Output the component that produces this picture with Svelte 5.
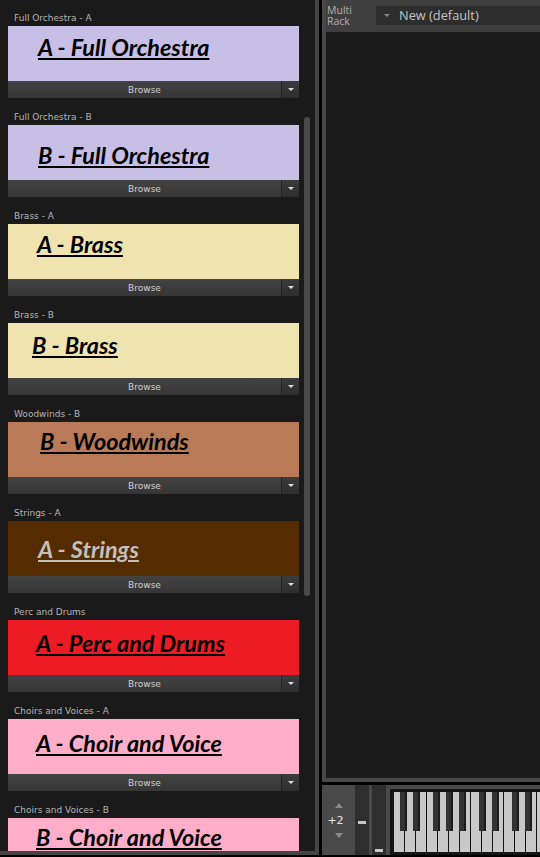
<script>
  const items = [
    { label: 'Full Orchestra - A', title: 'A - Full Orchestra', bg: '#c8bfe7', fg: '#000', x: 30, y: 6 },
    { label: 'Full Orchestra - B', title: 'B - Full Orchestra', bg: '#c8bfe7', fg: '#000', x: 30, y: 15 },
    { label: 'Brass - A', title: 'A - Brass', bg: '#efe4b0', fg: '#000', x: 29, y: 5 },
    { label: 'Brass - B', title: 'B - Brass', bg: '#efe4b0', fg: '#000', x: 24, y: 7 },
    { label: 'Woodwinds - B', title: 'B - Woodwinds', bg: '#b97a57', fg: '#000', x: 32, y: 4 },
    { label: 'Strings - A', title: 'A - Strings', bg: '#552b00', fg: '#c3c0bc', x: 30, y: 13 },
    { label: 'Perc and Drums', title: 'A - Perc and Drums', bg: '#ed1c24', fg: '#000', x: 28, y: 8 },
    { label: 'Choirs and Voices - A', title: 'A - Choir and Voice', bg: '#ffaec9', fg: '#000', x: 28, y: 9 },
    { label: 'Choirs and Voices - B', title: 'B - Choir and Voice', bg: '#ffaec9', fg: '#000', x: 28, y: 4 }
  ];
  const whites = Array.from({ length: 14 }, (_, i) => i);
  const blacks = [6, 19, 39, 52, 65, 85, 98, 118, 131];
</script>

<div class="app">
  <aside class="left">
    <div class="list">
      {#each items as it}
        <section class="inst">
          <div class="label">{it.label}</div>
          <div class="art" style="background:{it.bg};color:{it.fg};padding:{it.y}px 0 0 {it.x}px">
            <span class="title">{it.title}</span>
          </div>
          <div class="browse">
            <span class="browse-main">Browse</span>
            <span class="browse-menu"><i class="tri"></i></span>
          </div>
        </section>
      {/each}
    </div>
    <div class="scroll"></div>
  </aside>

  <main class="right">
    <div class="rack">
      <header class="head">
        <div class="mr">Multi<br />Rack</div>
        <div class="preset"><i class="tri small"></i><span>New (default)</span></div>
      </header>
      <div class="canvas"></div>
    </div>

    <footer class="bottom">
      <div class="transpose">
        <i class="arrow up"></i>
        <span>+2</span>
        <i class="arrow down"></i>
      </div>
      <div class="fader one"><b></b></div>
      <div class="fader two"><b></b></div>
      <div class="keys">
        <div class="whites">
          {#each whites as w (w)}<div class="white"></div>{/each}
        </div>
        {#each blacks as b (b)}<div class="black" style="left:{b}px"></div>{/each}
      </div>
    </footer>
  </main>
</div>

<style>
  :global(body) { margin: 0; background: #000; }
  .app {
    width: 540px;
    height: 857px;
    display: flex;
    gap: 3px;
    overflow: hidden;
    background: #000;
    font-family: "Liberation Sans", sans-serif;
  }
  .left {
    position: relative;
    width: 319px;
    height: 855px;
    flex: none;
    box-sizing: border-box;
    background: #1a1a1a;
    border-right: 4px solid #444;
    border-bottom: 4px solid #444;
    overflow: hidden;
  }
  .list {
    display: flex;
    flex-direction: column;
    padding: 8px 0 0 8px;
    width: 291px;
  }
  .inst { flex: none; height: 99px; }
  .label {
    height: 18px;
    padding-left: 6px;
    font: 9px/20px "DejaVu Sans", sans-serif;
    color: #b4b4b4;
  }
  .art {
    height: 55px;
    box-sizing: border-box;
    overflow: hidden;
  }
  .title {
    font: italic 700 23.4px/30px Lato, sans-serif;
    text-decoration: underline;
    text-decoration-thickness: 2px;
    text-underline-offset: 2px;
    white-space: nowrap;
  }
  .browse {
    display: flex;
    height: 17px;
    background: #3a3a3a;
  }
  .browse-main {
    flex: 1;
    text-align: center;
    font: 9px/18px "DejaVu Sans", sans-serif;
    color: #d0d0d0;
    background: linear-gradient(#434343, #363636);
  }
  .browse-menu {
    width: 17px;
    border-left: 1px solid #222;
    display: flex;
    align-items: center;
    justify-content: center;
    background: linear-gradient(#3c3c3c, #2e2e2e);
  }
  .tri {
    width: 0;
    height: 0;
    border-left: 3px solid transparent;
    border-right: 3px solid transparent;
    border-top: 3px solid #ddd;
  }
  .tri.small { border-top-color: #888; margin: 0 9px 0 8px; }
  .scroll {
    position: absolute;
    left: 304px;
    top: 117px;
    width: 6px;
    height: 479px;
    background: #4a4a4a;
    border-radius: 3px;
  }
  .right {
    flex: 1;
    min-width: 0;
    display: flex;
    flex-direction: column;
    gap: 3px;
    height: 855px;
  }
  .rack {
    height: 782px;
    flex: none;
    box-sizing: border-box;
    display: flex;
    flex-direction: column;
    background: #424242;
    border-left: 4px solid #484848;
    border-bottom: 4px solid #4a4a4a;
  }
  .head {
    height: 32px;
    flex: none;
    display: flex;
    padding-top: 6px;
    box-sizing: border-box;
    background: #3f3f3f;
  }
  .mr {
    width: 50px;
    padding-left: 1px;
    margin-top: -1px;
    font: 500 10.5px/11px "Open Sans", sans-serif;
    color: #b0b0b0;
    box-sizing: border-box;
  }
  .preset {
    flex: 1;
    height: 19px;
    display: flex;
    align-items: center;
    background: #2d2d2d;
    font: 12.8px/19px "Open Sans", sans-serif;
    color: #c4c4c4;
    white-space: nowrap;
  }
  .canvas { flex: 1; background: #1a1a1a; }
  .bottom {
    flex: 1;
    display: flex;
    background: #333;
  }
  .transpose {
    width: 33px;
    flex: none;
    background: #4a4a4a;
    display: flex;
    flex-direction: column;
    align-items: center;
    justify-content: center;
    gap: 7px;
    padding-top: 1px;
    box-sizing: border-box;
    color: #e4e4e4;
    font: 11px/11px "DejaVu Sans", sans-serif;
  }
  .transpose span { margin-right: 6px; }
  .arrow { width: 0; height: 0; border-left: 4px solid transparent; border-right: 4px solid transparent; }
  .arrow.up { border-bottom: 5px solid #8a8a8a; }
  .arrow.down { border-top: 5px solid #8a8a8a; }
  .fader {
    position: relative;
    width: 14px;
    flex: none;
    background: #2e2e2e;
  }
  .fader.two { margin-left: 3px; box-shadow: -3px 0 0 #4a4a4a; }
  .fader b {
    position: absolute;
    left: 3px;
    width: 8px;
    height: 3px;
    background: #c8c8c8;
  }
  .fader.one b { top: 36px; }
  .fader.two b { top: 64px; }
  .keys {
    position: relative;
    flex: 1;
    box-sizing: border-box;
    background: #141414;
    border-left: 4px solid #4a4a4a;
    border-top: 4px solid #4a4a4a;
    padding: 3px 0 0 4px;
  }
  .whites { display: flex; height: 60px; }
  .white {
    width: 10px;
    flex: none;
    height: 60px;
    margin-right: 1px;
    background: #c8c8c8;
  }
  .black {
    position: absolute;
    top: 3px;
    width: 7px;
    height: 39px;
    margin-left: 4px;
    background: linear-gradient(90deg, #333 0 5px, #1c1c1c 5px);
  }
</style>
